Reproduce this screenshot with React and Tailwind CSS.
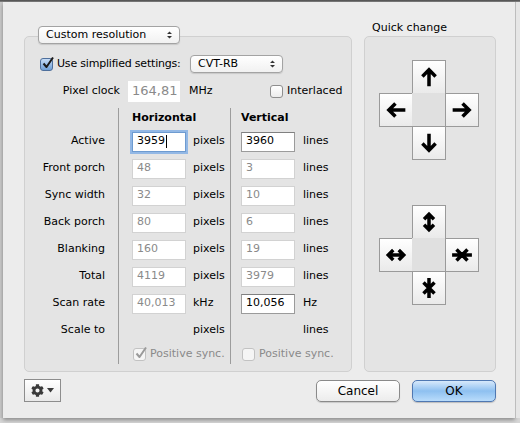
import { FaCog } from 'react-icons/fa';

const font = { fontFamily: '"DejaVu Sans", "Liberation Sans", sans-serif' };

const Stepper = () => (
  <svg width="7" height="10" viewBox="0 0 7 10" className="shrink-0">
    <path d="M1 4 L3.5 1.5 L6 4 Z M1 6 L3.5 8.5 L6 6 Z" fill="#333" />
  </svg>
);

const Popup = ({ label, className }) => (
  <div
    className={`flex items-center justify-between rounded-[4px] border border-[#a3a3a3] bg-gradient-to-b from-white to-[#f1f1f1] pl-[7px] pr-[6px] text-[11px] text-black shadow-[0_1px_1px_rgba(0,0,0,0.12)] ${className}`}
  >
    <span>{label}</span>
    <Stepper />
  </div>
);

const Check = ({ checked, blue, disabled }) => (
  <div
    className={`relative h-[13px] w-[13px] shrink-0 rounded-[3px] border ${
      blue
        ? 'border-[#4e6f9c] bg-gradient-to-b from-[#c6dcf5] to-[#6f9fd6]'
        : disabled
        ? 'border-[#c2c2c2] bg-[#f5f5f5]'
        : 'border-[#8e8e8e] bg-gradient-to-b from-white to-[#ececec]'
    }`}
  >
    {checked && (
      <svg width="14" height="14" viewBox="0 0 14 14" className="absolute -top-[3px] left-0">
        <path
          d="M2.5 7.5 L5.5 11 L12 1.5"
          fill="none"
          stroke={disabled ? '#9a9a9a' : '#1a1a1a'}
          strokeWidth="2"
          strokeLinejoin="round"
        />
      </svg>
    )}
  </div>
);

const Field = ({ value, muted, focused, editable, className = '' }) => (
  <div
    className={`flex h-[20px] w-[54px] items-center bg-white pl-[4px] text-[11px] ${
      focused
        ? 'border border-[#6e9bd0] shadow-[0_0_0_2px_rgba(120,170,230,0.75)]'
        : editable
        ? 'border border-[#9b9b9b] border-t-[#808080]'
        : 'border border-[#d2d2d2]'
    } ${muted ? 'text-[#8a8a8a]' : 'text-black'} ${className}`}
  >
    {value}
    {focused && <span className="ml-[1px] h-[13px] w-[1px] bg-black" />}
  </div>
);

const rows = [
  { label: 'Active', h: '3959', hFocus: true, hu: 'pixels', v: '3960', vEdit: true, vu: 'lines' },
  { label: 'Front porch', h: '48', hu: 'pixels', v: '3', vu: 'lines' },
  { label: 'Sync width', h: '32', hu: 'pixels', v: '10', vu: 'lines' },
  { label: 'Back porch', h: '80', hu: 'pixels', v: '6', vu: 'lines' },
  { label: 'Blanking', h: '160', hu: 'pixels', v: '19', vu: 'lines' },
  { label: 'Total', h: '4119', hu: 'pixels', v: '3979', vu: 'lines' },
  { label: 'Scan rate', h: '40,013', hu: 'kHz', v: '10,056', vEdit: true, vu: 'Hz' },
  { label: 'Scale to', hu: 'pixels', vu: 'lines' },
];

const Glyph = ({ d, rotate = 0 }) => (
  <svg width="22" height="22" viewBox="0 0 20 20" style={{ transform: `rotate(${rotate}deg)` }}>
    <path d={d} fill="none" stroke="#000" strokeWidth="3.2" strokeLinejoin="miter" strokeLinecap="butt" />
  </svg>
);

const ARROW = 'M4 9.5 L10 3.5 L16 9.5 M10 4 V18.5';
const DOUBLE = 'M5.5 7.5 L10 3 L14.5 7.5 M5.5 12.5 L10 17 L14.5 12.5 M10 3.5 V16.5';
const SQUEEZE = 'M10 1 V8.5 M5 5 L10 10 L15 5 M10 19 V11.5 M5 15 L10 10 L15 15';

const ArrowBtn = ({ children, className = '' }) => (
  <div
    className={`flex h-[34px] w-[34px] items-center justify-center border border-[#9a9a9a] bg-gradient-to-b from-white to-[#eaeaea] ${className}`}
  >
    {children}
  </div>
);

const Cross = ({ up, left, right, down }) => (
  <div className="grid grid-cols-[33px_33px_34px] grid-rows-[33px_33px_34px]">
    <div />
    <ArrowBtn>{up}</ArrowBtn>
    <div />
    <ArrowBtn>{left}</ArrowBtn>
    <div className="bg-[#e0e0e0]" />
    <ArrowBtn>{right}</ArrowBtn>
    <div />
    <ArrowBtn>{down}</ArrowBtn>
    <div />
  </div>
);

export default function App() {
  return (
    <div className="flex h-[423px] w-[520px] flex-col overflow-hidden bg-[#d6d6d6]" style={font}>
      <div className="h-[2px] bg-gradient-to-b from-[#4a4a4a] to-[#8a8a8a]" />
      <div className="flex">
        <div className="w-[3px] bg-[#c9c9c9]" />
        <div className="h-[416px] w-[512px] bg-[#ececec] pl-[21px] pt-[24px] shadow-[0_2px_4px_rgba(0,0,0,0.35)]">
          <div className="flex gap-[12px]">
            {/* Settings panel */}
            <div className="flex w-[328px] flex-col">
              <Popup label="Custom resolution" className="relative z-10 ml-[14px] h-[18px] w-[142px]" />
              <div className="-mt-[8px] h-[336px] rounded-[5px] border border-[#d0d0d0] bg-[#e4e4e4] text-[11px] text-black">
                <div className="mt-[18px] flex h-[18px] items-center pl-[15px]">
                  <Check checked blue />
                  <span className="ml-[4px] w-[133px] tracking-[-0.2px]">Use simplified settings:</span>
                  <Popup label="CVT-RB" className="h-[18px] w-[93px]" />
                </div>

                <div className="mt-[8px] flex h-[20px] items-center">
                  <span className="w-[95px] text-right">Pixel clock</span>
                  <div className="ml-[8px] flex h-[21px] w-[52px] items-center bg-white pl-[4px] text-[13px] text-[#8a8a8a]">
                    164,81
                  </div>
                  <span className="ml-[9px] w-[81px]">MHz</span>
                  <Check />
                  <span className="ml-[4px]">Interlaced</span>
                </div>

                <div className="mt-[7px] flex">
                  <div className="w-[93px]">
                    <div className="h-[20px]" />
                    {rows.map((r) => (
                      <div key={r.label} className="flex h-[27px] items-center justify-end pr-[13px]">
                        {r.label}
                      </div>
                    ))}
                  </div>

                  <div className="w-[112px] border-l border-[#9c9c9c] pl-[13px]">
                    <div className="flex h-[20px] items-center font-bold">Horizontal</div>
                    {rows.map((r) => (
                      <div key={r.label} className="flex h-[27px] items-center">
                        {r.h ? <Field value={r.h} muted={!r.hFocus} focused={r.hFocus} /> : <div className="w-[54px]" />}
                        <span className="ml-[7px]">{r.hu}</span>
                      </div>
                    ))}
                    <div className="flex h-[20px] items-center pl-[1px] text-[#8a8a8a]">
                      <Check checked disabled />
                      <span className="ml-[4px]">Positive sync.</span>
                    </div>
                  </div>

                  <div className="border-l border-[#9c9c9c] pl-[10px]">
                    <div className="flex h-[20px] items-center font-bold">Vertical</div>
                    {rows.map((r) => (
                      <div key={r.label} className="flex h-[27px] items-center">
                        {r.v ? <Field value={r.v} muted={!r.vEdit} editable={r.vEdit} /> : <div className="w-[54px]" />}
                        <span className="ml-[8px]">{r.vu}</span>
                      </div>
                    ))}
                    <div className="flex h-[20px] items-center pl-[1px] text-[#8a8a8a]">
                      <Check disabled />
                      <span className="ml-[4px]">Positive sync.</span>
                    </div>
                  </div>
                </div>
              </div>
            </div>

            {/* Quick change panel */}
            <div className="flex w-[132px] flex-col">
              <div className="-mt-[6px] h-[16px] pl-[8px] text-[11px] leading-[16px] text-black">Quick change</div>
              <div className="h-[336px] rounded-[5px] border border-[#d0d0d0] bg-[#e4e4e4] pl-[14px] pt-[23px]">
                <Cross
                  up={<Glyph d={ARROW} />}
                  left={<Glyph d={ARROW} rotate={-90} />}
                  right={<Glyph d={ARROW} rotate={90} />}
                  down={<Glyph d={ARROW} rotate={180} />}
                />
                <div className="mt-[45px]">
                  <Cross
                    up={<Glyph d={DOUBLE} />}
                    left={<Glyph d={DOUBLE} rotate={90} />}
                    right={<Glyph d={SQUEEZE} rotate={90} />}
                    down={<Glyph d={SQUEEZE} />}
                  />
                </div>
              </div>
            </div>
          </div>

          {/* Bottom buttons */}
          <div className="mt-[7px] flex w-[472px] items-start">
            <div className="flex h-[23px] w-[37px] items-center justify-center gap-[3px] border border-[#8d8d8d] bg-gradient-to-b from-white to-[#e9e9e9] text-[#3a3a3a]">
              <FaCog className="h-[13px] w-[13px]" />
              <svg width="7" height="5" viewBox="0 0 7 5">
                <path d="M0 0 H7 L3.5 4.5 Z" fill="#3a3a3a" />
              </svg>
            </div>
            <div className="ml-auto mt-[1px] flex h-[22px] w-[84px] items-center justify-center rounded-[5px] border border-[#8a8a8a] bg-gradient-to-b from-white to-[#ececec] text-[12px] text-black shadow-[0_1px_1px_rgba(0,0,0,0.15)]">
              Cancel
            </div>
            <div className="ml-[12px] mt-[1px] flex h-[22px] w-[84px] items-center justify-center rounded-[5px] border border-[#4f78b2] bg-gradient-to-b from-[#d7e9fb] via-[#8ec0f0] to-[#b9dcfb] text-[12px] text-black shadow-[0_1px_1px_rgba(0,0,0,0.2)]">
              OK
            </div>
          </div>
        </div>
        <div className="flex-1 border-l border-[#bdbdbd] bg-[#e6e6e6]" />
      </div>
    </div>
  );
}
